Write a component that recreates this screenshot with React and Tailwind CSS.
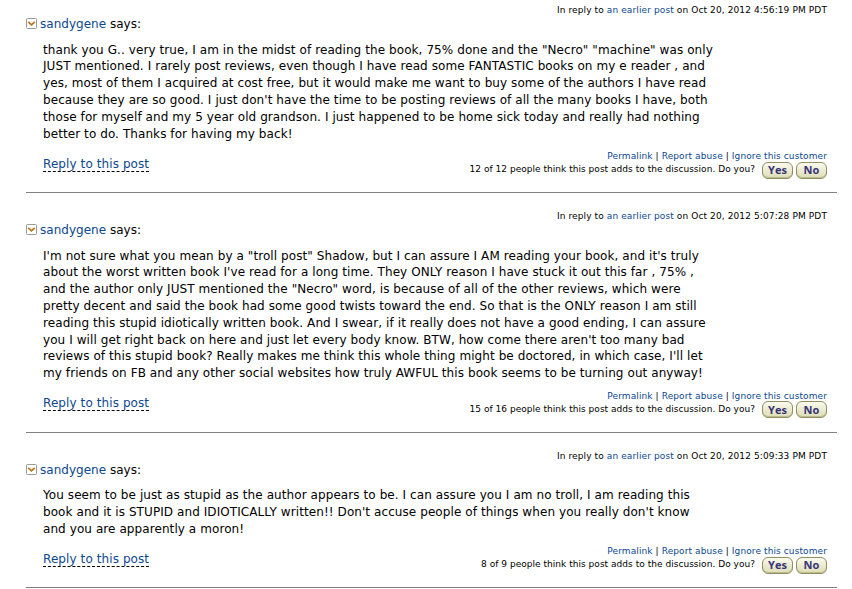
const posts = [
  {
    time: "Oct 20, 2012 4:56:19 PM PDT",
    votes: "12 of 12",
    lines: [
      'thank you G.. very true, I am in the midst of reading the book, 75% done and the "Necro" "machine" was only',
      "JUST mentioned. I rarely post reviews, even though I have read some FANTASTIC books on my e reader , and",
      "yes, most of them I acquired at cost free, but it would make me want to buy some of the authors I have read",
      "because they are so good. I just don't have the time to be posting reviews of all the many books I have, both",
      "those for myself and my 5 year old grandson. I just happened to be home sick today and really had nothing",
      "better to do. Thanks for having my back!",
    ],
  },
  {
    time: "Oct 20, 2012 5:07:28 PM PDT",
    votes: "15 of 16",
    lines: [
      "I'm not sure what you mean by a \"troll post\" Shadow, but I can assure I AM reading your book, and it's truly",
      "about the worst written book I've read for a long time. They ONLY reason I have stuck it out this far , 75% ,",
      'and the author only JUST mentioned the "Necro" word, is because of all of the other reviews, which were',
      "pretty decent and said the book had some good twists toward the end. So that is the ONLY reason I am still",
      "reading this stupid idiotically written book. And I swear, if it really does not have a good ending, I can assure",
      "you I will get right back on here and just let every body know. BTW, how come there aren't too many bad",
      "reviews of this stupid book? Really makes me think this whole thing might be doctored, in which case, I'll let",
      "my friends on FB and any other social websites how truly AWFUL this book seems to be turning out anyway!",
    ],
  },
  {
    time: "Oct 20, 2012 5:09:33 PM PDT",
    votes: "8 of 9",
    lines: [
      "You seem to be just as stupid as the author appears to be. I can assure you I am no troll, I am reading this",
      "book and it is STUPID and IDIOTICALLY written!! Don't accuse people of things when you really don't know",
      "and you are apparently a moron!",
    ],
  },
];

function VoteButton({ children }) {
  return (
    <button className="-mt-[0.4px] h-[17px] w-[31px] rounded-[6px] border border-[#8f8f62] bg-linear-to-b from-[#fbfbf0] via-[#ebebd0] to-[#dedeb6] font-['Open_Sans',sans-serif] text-[11px] leading-[14px] font-bold text-[#38347a] shadow-[inset_0_-1px_0_#bcbc90] [font-stretch:88%]">
      {children}
    </button>
  );
}

function Post({ post }) {
  return (
    <article className="border-b border-[#808080] pt-[17px] pb-[14.2px]">
      <div className="pr-[10px] text-right text-[9px] leading-[12px] tracking-[0.11px]">
        In reply to <a className="text-[#0c478f]">an earlier post</a> on {post.time}
      </div>
      <div className="flex h-[16px] items-start gap-[3px] text-[12px] leading-[16px] tracking-[0.02px]">
        <svg className="mt-[2px]" width="11" height="11" viewBox="0 0 11 11" fill="none">
          <rect x="0.5" y="0.5" width="10" height="10" rx="1" stroke="#999" />
          <path d="M2.3 3.8L5.5 6.8L8.7 3.8" stroke="#b8731a" strokeWidth="1.7" />
        </svg>
        <span><a className="text-[#0c478f]">sandygene</a> says:</span>
      </div>
      <div className="mt-[9.6px] pl-[17px] text-[12px] leading-[16.8px] tracking-[0.08px] whitespace-nowrap">
        {post.lines.map((line) => (
          <p key={line}>{line}</p>
        ))}
      </div>
      <div className="mt-[8.4px] flex h-[27px] justify-between pr-[10px] pl-[17px]">
        <a className="mt-[6px] h-[15px] border-b border-dashed border-black text-[12px] leading-[15px] tracking-[0.09px] text-[#0c478f]">
          Reply to this post
        </a>
        <div className="-mt-[0.8px] text-right text-[9px] leading-[12px]">
          <div className="tracking-[0.1px]">
            <a className="text-[#0c478f]">Permalink</a> | <a className="text-[#0c478f]">Report abuse</a> |{" "}
            <a className="text-[#0c478f]">Ignore this customer</a>
          </div>
          <div className="flex justify-end gap-[3px]">
            <span className="mr-[4px] leading-[14px] tracking-[0.03px]">
              {post.votes} people think this post adds to the discussion. Do you?
            </span>
            <VoteButton>Yes</VoteButton>
            <VoteButton>No</VoteButton>
          </div>
        </div>
      </div>
    </article>
  );
}

export default function App() {
  return (
    <div className="h-[589px] overflow-hidden bg-white font-['DejaVu_Sans',Verdana,sans-serif] text-black">
      <main className="mt-[-13px] ml-[26px] w-[811px]">
        {posts.map((post) => (
          <Post key={post.time} post={post} />
        ))}
      </main>
    </div>
  );
}
